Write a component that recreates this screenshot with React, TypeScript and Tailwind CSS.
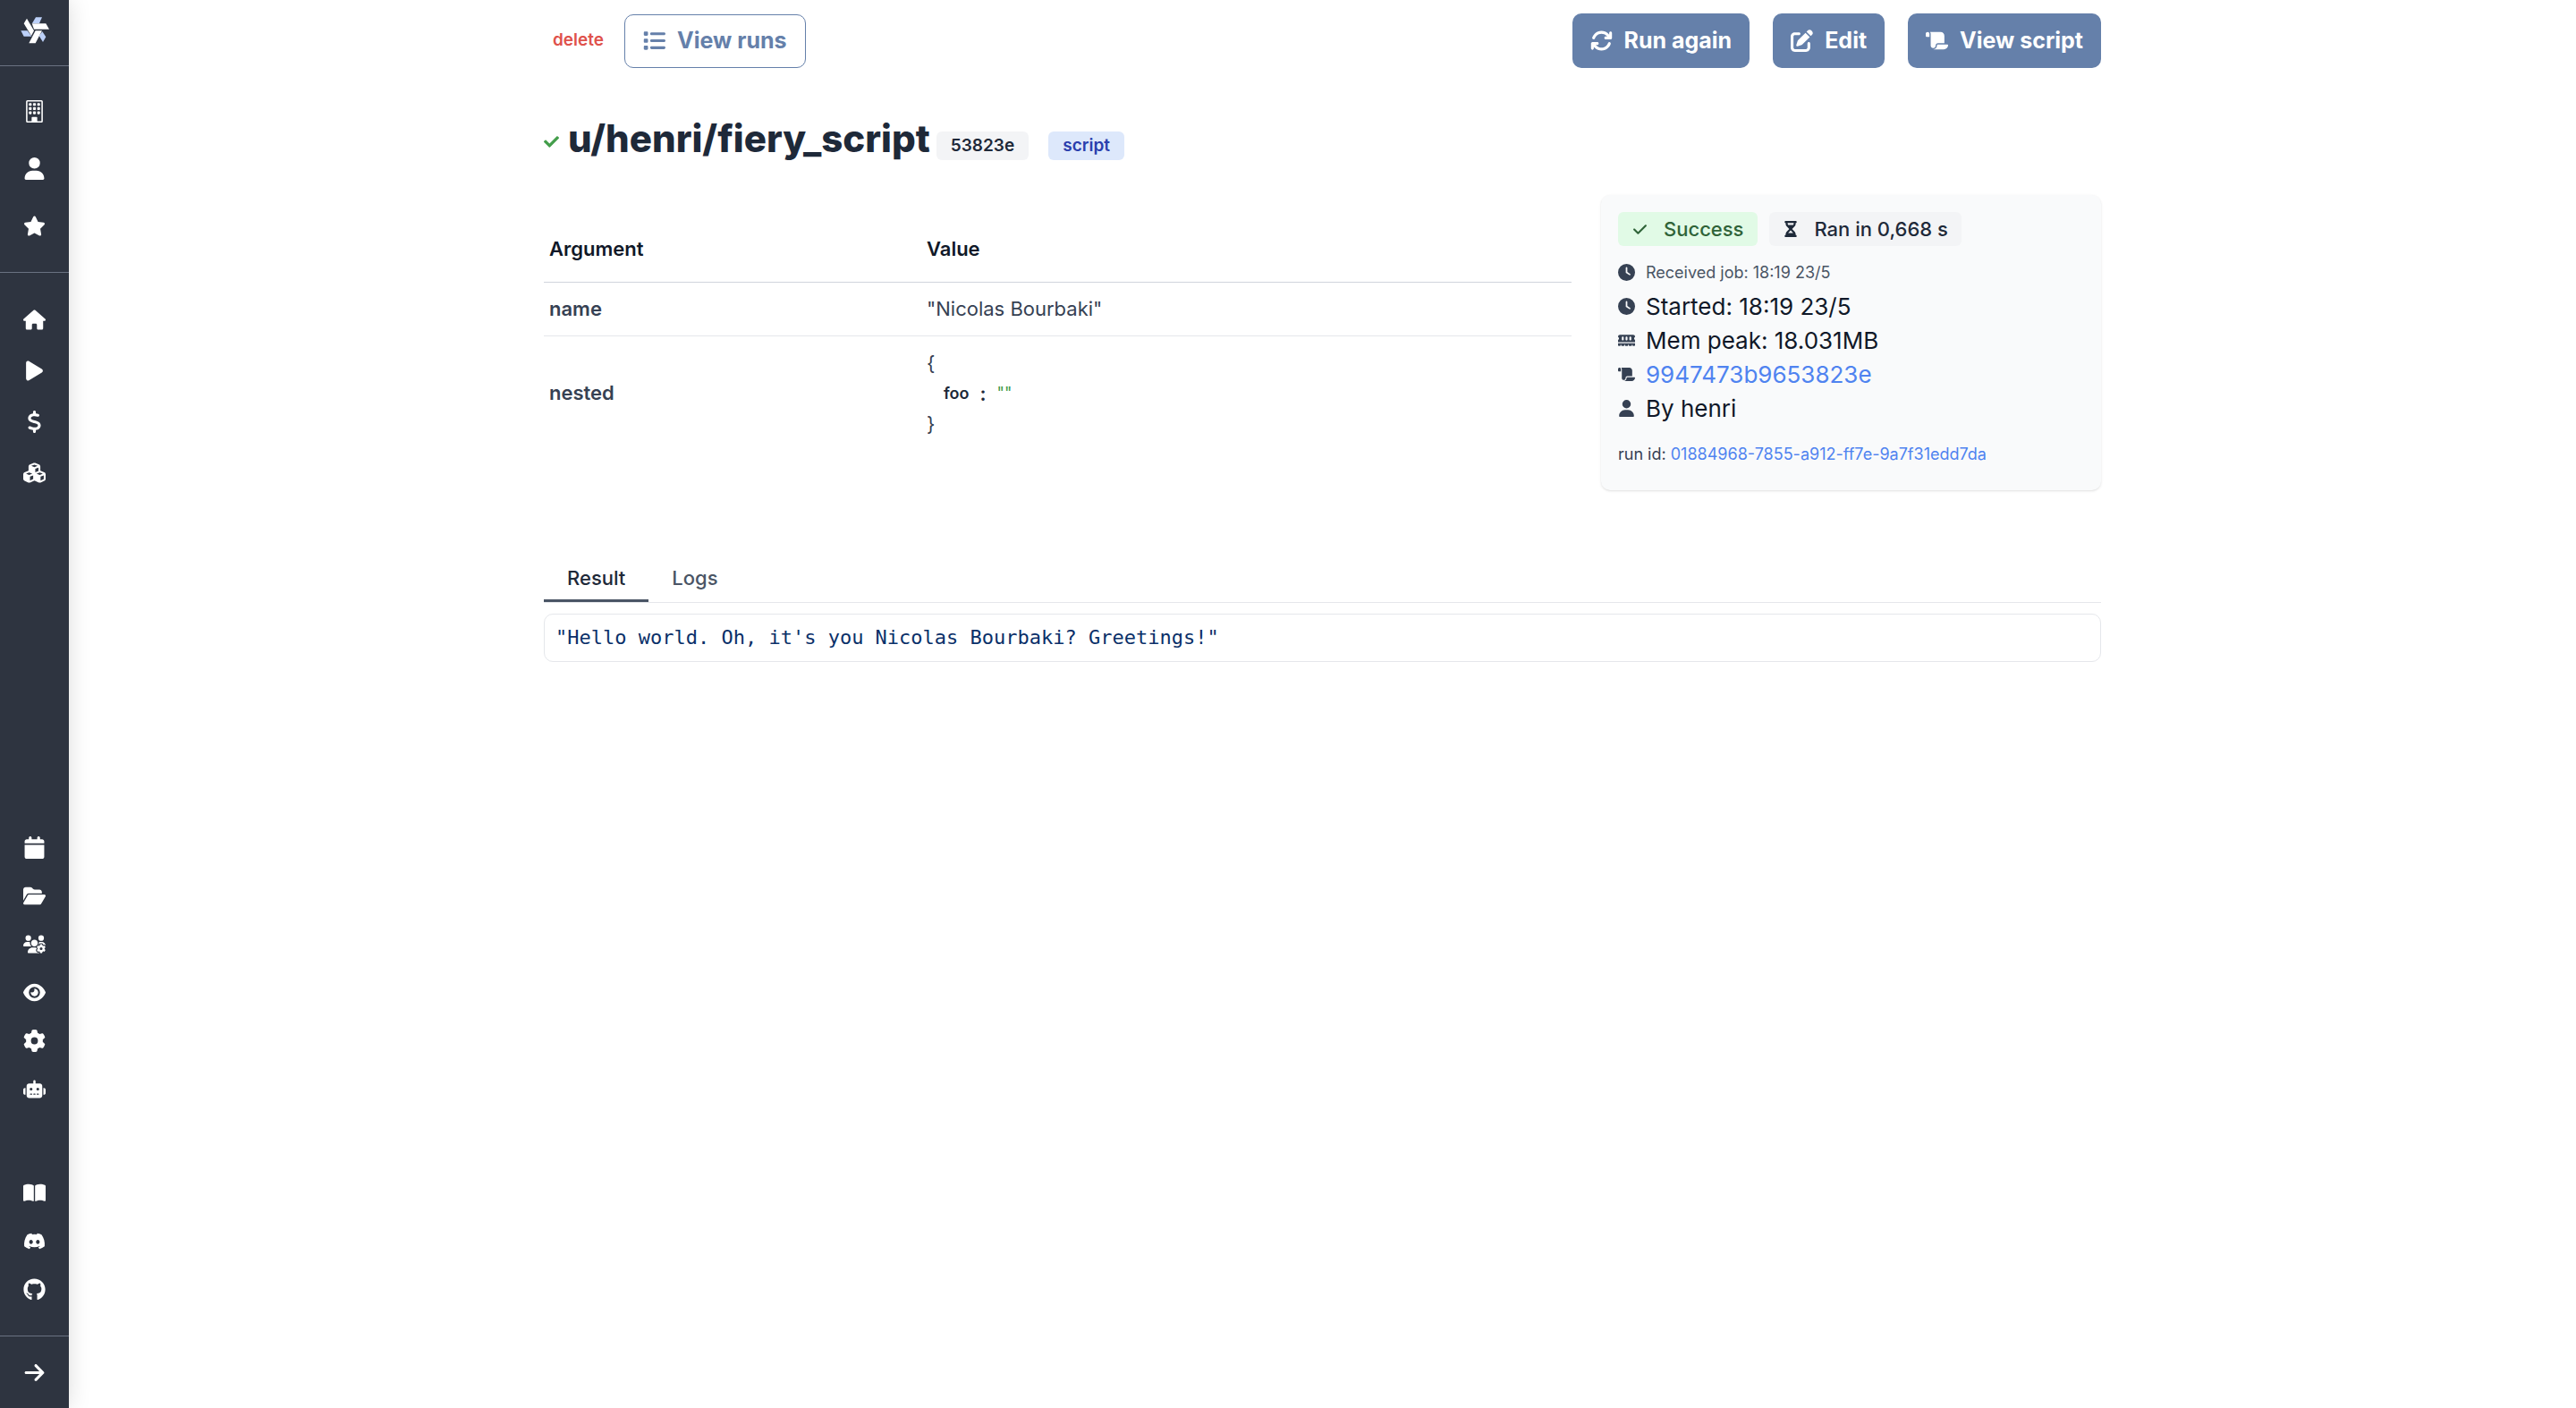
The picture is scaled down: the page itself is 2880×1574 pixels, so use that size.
import type { ReactNode } from 'react'
import type { IconType } from 'react-icons'
import { BsBuilding } from 'react-icons/bs'
import { FaCheck as FaCheckBold } from 'react-icons/fa'
import {
  FaArrowRight, FaArrowsRotate, FaBookOpen, FaCalendar, FaCheck, FaClock, FaCubes, FaDiscord,
  FaDollarSign, FaEye, FaFolderOpen, FaGear, FaGithub, FaHourglassHalf, FaHouse, FaList, FaMemory,
  FaPenToSquare, FaPlay, FaRobot, FaScroll, FaStar, FaUser, FaUsersGear,
} from 'react-icons/fa6'

type NavItem = { label: string; icon: IconType }

const workspaceNav: NavItem[] = [
  { label: 'Workspace', icon: BsBuilding },
  { label: 'User', icon: FaUser },
  { label: 'Favorites', icon: FaStar },
]
const mainNav: NavItem[] = [
  { label: 'Home', icon: FaHouse },
  { label: 'Runs', icon: FaPlay },
  { label: 'Variables', icon: FaDollarSign },
  { label: 'Resources', icon: FaCubes },
]
const adminNav: NavItem[] = [
  { label: 'Schedules', icon: FaCalendar },
  { label: 'Folders', icon: FaFolderOpen },
  { label: 'Groups', icon: FaUsersGear },
  { label: 'Audit logs', icon: FaEye },
  { label: 'Settings', icon: FaGear },
  { label: 'Workers', icon: FaRobot },
]
const helpNav: NavItem[] = [
  { label: 'Documentation', icon: FaBookOpen },
  { label: 'Discord', icon: FaDiscord },
  { label: 'GitHub', icon: FaGithub },
]

function Logo() {
  return (
    <svg viewBox="0 0 96 90" className="h-[30px] w-8" aria-hidden="true">
      <g fill="#bcd0f8">
        <path d="M51 1h21l-9 20H39z" />
        <path d="M1 46h22l14 19H11z" />
        <path d="M73 49l12 18-10 17-13-21z" />
      </g>
      <g fill="#fff">
        <path d="M38 22h47l11 19H45z" />
        <path d="M21 5l24 41-9 17L11 22z" />
        <path d="M50 46h22L50 88H28z" />
      </g>
    </svg>
  )
}

function NavLinks({ items, rowClass }: { items: NavItem[]; rowClass: string }) {
  return (
    <>
      {items.map(({ label, icon: Icon }) => (
        <a key={label} href="#" aria-label={label} className={`flex items-center justify-center ${rowClass}`}>
          <Icon className="size-[25px]" />
        </a>
      ))}
    </>
  )
}

function Sidebar() {
  return (
    <nav className="flex w-[77px] shrink-0 flex-col bg-[#2e3440] text-white shadow-[0_0_24px_rgba(0,0,0,0.14)]">
      <a href="#" aria-label="Windmill" className="flex h-[74px] items-center justify-center border-b border-gray-500 pb-[6px]">
        <Logo />
      </a>
      <div className="border-b border-gray-500 pt-[18px] pb-5">
        <NavLinks items={workspaceNav} rowClass="h-16" />
      </div>
      <div className="flex-1 pt-6">
        <NavLinks items={mainNav} rowClass="h-[57px]" />
      </div>
      <div className="pb-[62px]">
        <NavLinks items={adminNav} rowClass="h-[54px]" />
      </div>
      <div className="border-b border-gray-500 pb-[25px]">
        <NavLinks items={helpNav} rowClass="h-[54px]" />
      </div>
      <button type="button" aria-label="Expand sidebar" className="flex h-20 items-center justify-center">
        <FaArrowRight className="size-[25px]" />
      </button>
    </nav>
  )
}

function PrimaryButton({ icon: Icon, children }: { icon: IconType; children: ReactNode }) {
  return (
    <button type="button" className="flex h-[61px] items-center gap-[13px] rounded-[10px] bg-[#6580aa] px-5 text-[25px] font-bold text-white">
      <Icon className="size-[25px]" />
      {children}
    </button>
  )
}

function Detail({ icon: Icon, children, small }: { icon: IconType; children: ReactNode; small?: boolean }) {
  return (
    <li className={small ? 'flex h-[38px] items-center gap-3 text-[18px] text-gray-600' : 'flex h-[38px] items-center gap-3 text-[26px] text-gray-900'}>
      <Icon className="size-[19px] text-gray-700" />
      {children}
    </li>
  )
}

function Arguments() {
  return (
    <table className="w-full text-left text-[22px] text-gray-700">
      <thead>
        <tr className="h-[73px] border-b border-gray-300 text-gray-900">
          <th className="w-[422px] px-[6px] font-semibold">Argument</th>
          <th className="px-[6px] font-semibold">Value</th>
        </tr>
      </thead>
      <tbody>
        <tr className="h-[60px] border-b border-gray-200">
          <th scope="row" className="px-[6px] font-semibold">name</th>
          <td className="px-[6px]">"Nicolas Bourbaki"</td>
        </tr>
        <tr>
          <th scope="row" className="px-[6px] font-semibold">nested</th>
          <td className="px-[6px] py-[13px] leading-[34px]">
            <div>{'{'}</div>
            <div className="flex items-center pl-[19px]">
              <span className="text-[18px] font-semibold text-gray-800">foo</span>
              <span className="px-3 font-semibold text-gray-800">:</span>
              <span className="text-[18px] text-[#3f9a47]">""</span>
            </div>
            <div>{'}'}</div>
          </td>
        </tr>
      </tbody>
    </table>
  )
}

function JobDetails() {
  return (
    <aside className="w-[559px] shrink-0 rounded-[10px] bg-gray-50 px-[19px] pt-[19px] pb-[27px] shadow-sm">
      <div className="flex gap-[13px] text-[22px] font-medium">
        <span className="flex h-[38px] items-center gap-[18px] rounded-md bg-[#e1fae6] px-4 text-[#2f6338]">
          <FaCheck className="size-[17px]" />
          Success
        </span>
        <span className="flex h-[38px] items-center gap-[17px] rounded-md bg-gray-100 px-[15px] text-gray-800">
          <FaHourglassHalf className="size-[18px]" />
          Ran in 0,668 s
        </span>
      </div>
      <ul className="pt-[10px]">
        <Detail icon={FaClock} small>Received job: 18:19 23/5</Detail>
        <Detail icon={FaClock}>Started: 18:19 23/5</Detail>
        <Detail icon={FaMemory}>Mem peak: 18.031MB</Detail>
        <Detail icon={FaScroll}><a href="#" className="text-[#4f83f0]">9947473b9653823e</a></Detail>
        <Detail icon={FaUser}>By henri</Detail>
      </ul>
      <p className="pt-5 text-[18px] leading-[26px] text-gray-700">
        run id: <a href="#" className="text-[#4f83f0]">01884968-7855-a912-ff7e-9a7f31edd7da</a>
      </p>
    </aside>
  )
}

export default function App() {
  return (
    <div className="flex min-h-screen bg-white font-['Inter',sans-serif]">
      <Sidebar />
      <main className="flex-1">
        <div className="mx-auto max-w-[1741px] pt-[15px]">
          <div className="flex items-center justify-between">
            <div className="flex items-center gap-[23px] pl-[10px]">
              <button type="button" className="text-[19px] font-semibold text-[#df524c]">delete</button>
              <button type="button" className="flex h-[60px] items-center gap-[13px] rounded-[10px] border border-[#6580aa] px-5 text-[25px] font-bold text-[#6580aa]">
                <FaList className="size-[25px]" />
                View runs
              </button>
            </div>
            <div className="flex gap-[26px]">
              <PrimaryButton icon={FaArrowsRotate}>Run again</PrimaryButton>
              <PrimaryButton icon={FaPenToSquare}>Edit</PrimaryButton>
              <PrimaryButton icon={FaScroll}>View script</PrimaryButton>
            </div>
          </div>

          <div className="flex items-center pt-[50px]">
            <FaCheckBold className="mt-[6px] mr-[10px] size-[17px] text-[#449e4b]" />
            <h1 className="text-[42px] leading-[58px] font-extrabold text-gray-800">u/henri/fiery_script</h1>
            <span className="mt-4 ml-[7px] flex h-8 items-center rounded-md bg-gray-100 px-4 text-[19px] font-semibold text-gray-800">53823e</span>
            <span className="mt-4 ml-[22px] flex h-8 items-center rounded-md bg-[#dde8fb] px-4 text-[19px] font-semibold text-[#2a3fae]">script</span>
          </div>

          <div className="flex gap-[33px] pt-[34px]">
            <div className="flex-1 pt-6">
              <Arguments />
            </div>
            <JobDetails />
          </div>

          <div role="tablist" className="mt-[74px] flex border-b border-gray-200 text-[22px] font-medium">
            <button type="button" role="tab" aria-selected="true" className="h-[51px] border-b-[3px] border-gray-600 px-[26px] text-gray-800">Result</button>
            <button type="button" role="tab" aria-selected="false" className="h-[51px] border-b-[3px] border-transparent px-[26px] text-gray-600">Logs</button>
          </div>
          <pre className="mt-3 rounded-[10px] border border-gray-200 px-3 py-[10px] font-['DejaVu_Sans_Mono',monospace] text-[22px] leading-8 text-[#0a3069]">"Hello world. Oh, it's you Nicolas Bourbaki? Greetings!"</pre>
        </div>
      </main>
    </div>
  )
}
